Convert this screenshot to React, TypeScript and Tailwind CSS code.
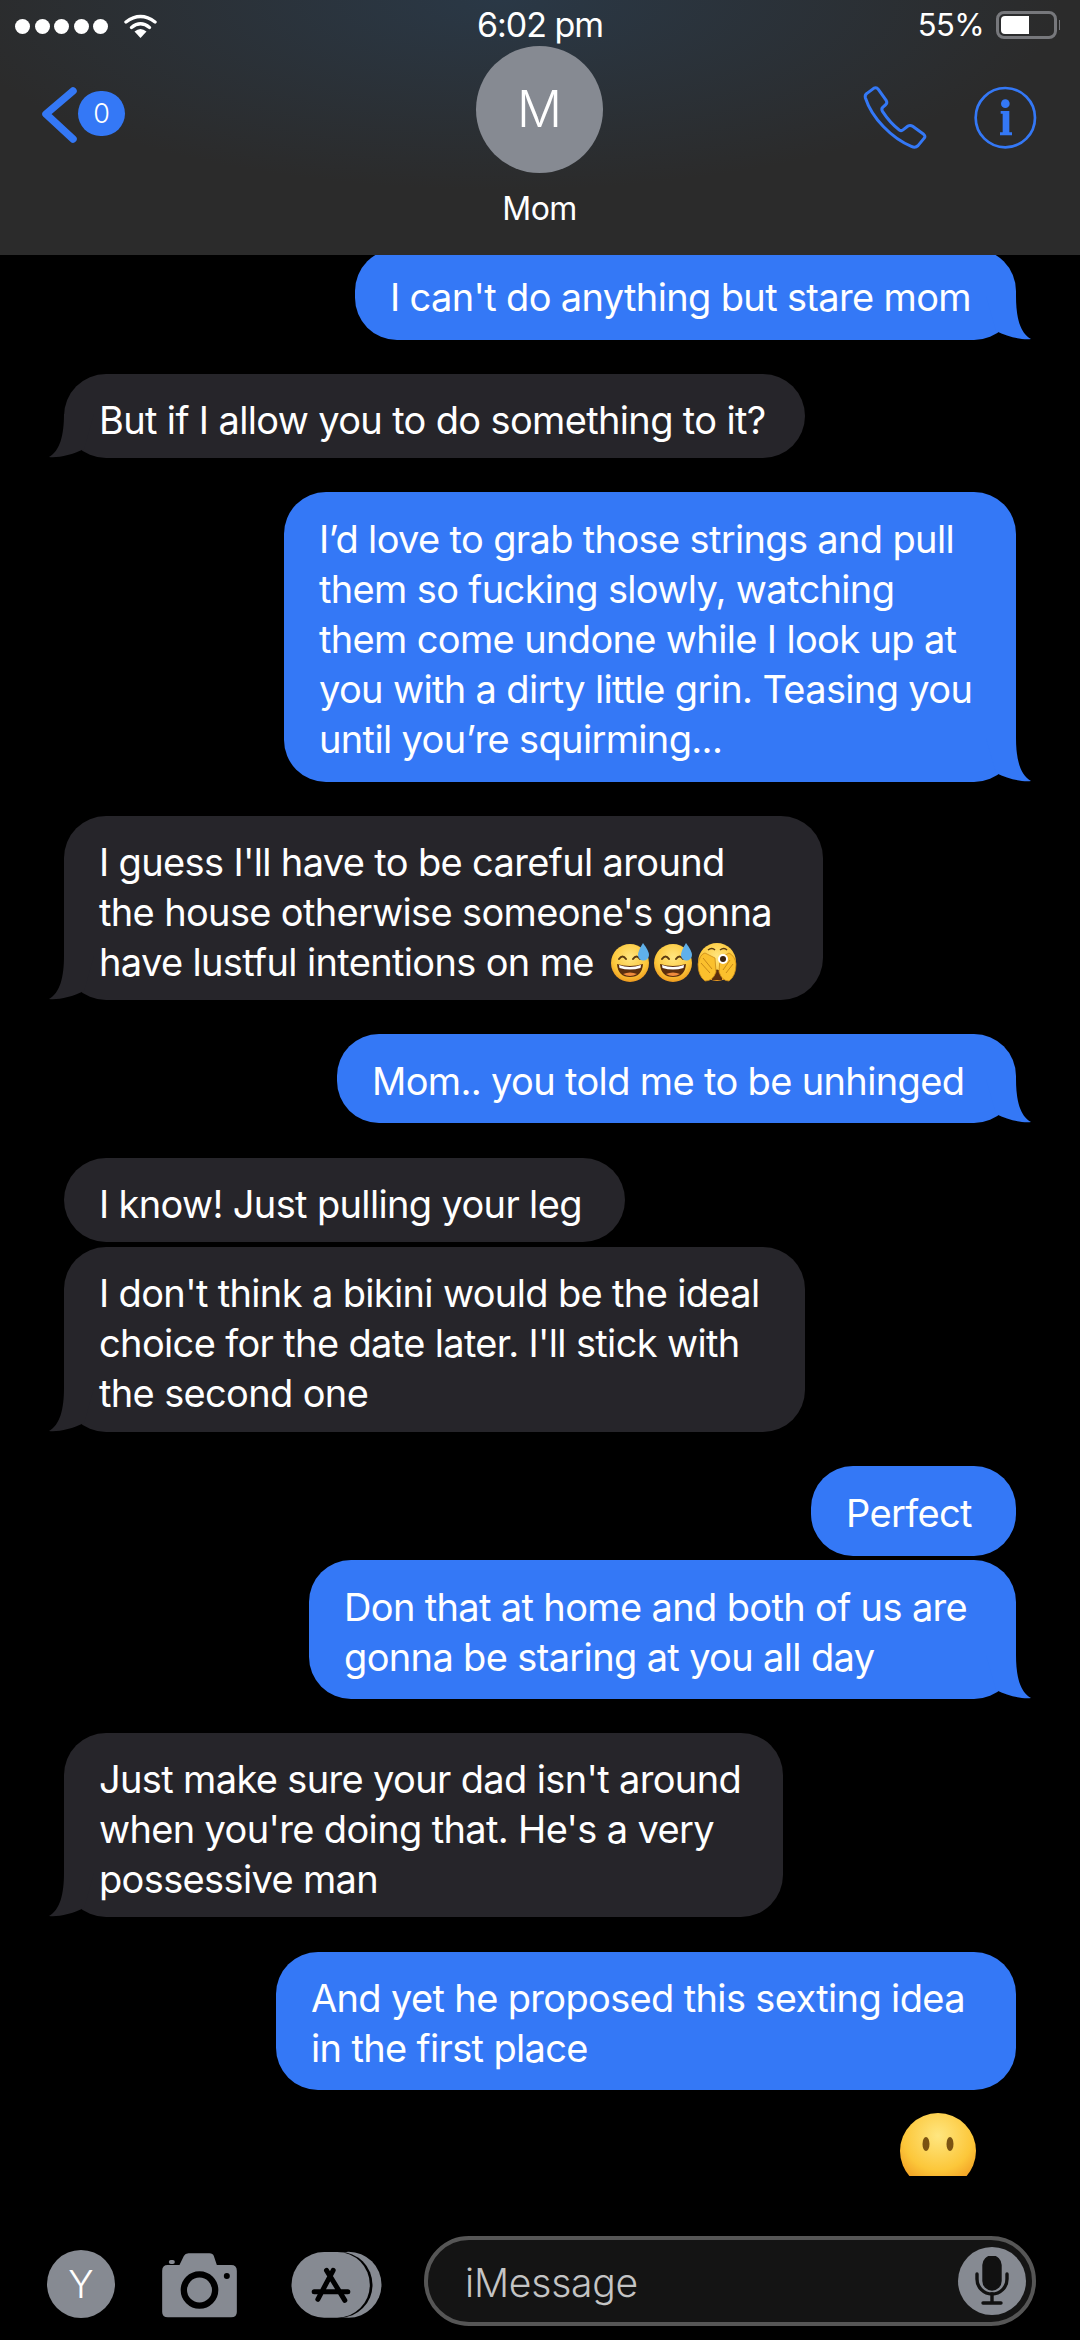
import type { ReactNode } from "react";

function Tail({ side }: { side: "left" | "right" }) {
  return (
    <svg
      className={side === "right" ? "absolute right-[-16px] bottom-0" : "absolute left-[-16px] bottom-0 -scale-x-100"}
      width="60"
      height="44"
      viewBox="-44 -43 60 44"
    >
      <path
        d="M-30 -43 L0 -43 C0 -22 4 -6 15 0 C6 1 -8 -2 -20 -8 Z"
        fill={side === "right" ? "#3478f6" : "#26252a"}
      />
    </svg>
  );
}

function Bubble({
  side,
  tail,
  className,
  children,
}: {
  side: "left" | "right";
  tail?: boolean;
  className: string;
  children: ReactNode;
}) {
  return (
    <div
      className={`relative flex items-center rounded-[42px] px-[35px] ${
        side === "right" ? "self-end mr-[64px] bg-[#3478f6] pt-[4px]" : "self-start ml-[64px] bg-[#26252a] pt-[7px]"
      } ${className}`}
    >
      {tail && <Tail side={side} />}
      <div className="text-[38px] leading-[50px] tracking-[-0.65px] text-white whitespace-nowrap">{children}</div>
    </div>
  );
}

function Line({ children }: { children: ReactNode }) {
  return <div>{children}</div>;
}

function GrinSweat({ className }: { className: string }) {
  return (
    <svg className={`inline-block align-[-6px] ${className}`} width="40" height="40" viewBox="0 0 40 40">
      <defs>
        <radialGradient id="face" cx="50%" cy="35%" r="65%">
          <stop offset="0%" stopColor="#ffe680" />
          <stop offset="70%" stopColor="#fcc73a" />
          <stop offset="100%" stopColor="#ee9a1e" />
        </radialGradient>
      </defs>
      <circle cx="19" cy="21" r="19" fill="url(#face)" />
      <path d="M8 17 Q11.5 12 15 17 M22 17 Q25.5 12 29 17" stroke="#5a3a10" strokeWidth="2" fill="none" strokeLinecap="round" />
      <path d="M6 22 Q19 26 32 22 Q31 35 19 35 Q7 35 6 22 Z" fill="#5b2e0e" />
      <path d="M8 23 Q19 27 30 23 L29.5 26 Q19 29 8.5 26 Z" fill="#fff" />
      <path d="M12 32 Q19 29 26 32 Q19 36 12 32 Z" fill="#f08a3c" />
      <path d="M32 1 Q38 9 38 13 A5.5 5.5 0 0 1 27 13 Q27 9 32 1 Z" fill="#5fb0ea" />
    </svg>
  );
}

function HandsFace() {
  return (
    <svg className="inline-block align-[-6px]" width="40" height="40" viewBox="0 0 40 40">
      <defs>
        <radialGradient id="face2" cx="50%" cy="35%" r="65%">
          <stop offset="0%" stopColor="#ffe680" />
          <stop offset="70%" stopColor="#fcc73a" />
          <stop offset="100%" stopColor="#ee9a1e" />
        </radialGradient>
      </defs>
      <circle cx="20" cy="20" r="19" fill="url(#face2)" />
      <path d="M11 8 Q15 5 18 8 M23 8 Q27 5 30 8" stroke="#5a3a10" strokeWidth="1.5" fill="none" />
      <path d="M15 31 Q20 24 25 31 L25 38 L15 38 Z" fill="#5b2e0e" />
      <path d="M1 22 Q3 12 8 11 L18 16 L19 30 Q16 39 8 39 Q1 34 1 22 Z" fill="#fbc02d" stroke="#c98a18" strokeWidth="0.8" />
      <path d="M39 22 Q38 14 32 11 L23 16 L22 30 Q25 39 32 39 Q39 34 39 22 Z" fill="#fbc02d" stroke="#c98a18" strokeWidth="0.8" />
      <path d="M6 16 L15 27 M4 21 L13 31 M33 18 L26 28 M36 22 L29 31" stroke="#c98a18" strokeWidth="1" />
      <circle cx="26" cy="17" r="5" fill="#fff" />
      <circle cx="26" cy="17" r="3" fill="#3a2410" />
    </svg>
  );
}

function NoMouthFace() {
  return (
    <div className="self-end mr-[104px] mt-[23px] h-[63px] w-[76px] overflow-hidden">
      <svg width="76" height="76" viewBox="0 0 76 76">
        <defs>
          <radialGradient id="blank" cx="50%" cy="30%" r="70%">
            <stop offset="0%" stopColor="#ffe680" />
            <stop offset="65%" stopColor="#fcc73a" />
            <stop offset="100%" stopColor="#f09a20" />
          </radialGradient>
        </defs>
        <circle cx="38" cy="38" r="38" fill="url(#blank)" />
        <ellipse cx="26" cy="31" rx="3.5" ry="7" fill="#7a5212" />
        <ellipse cx="50" cy="31" rx="3.5" ry="7" fill="#7a5212" />
      </svg>
    </div>
  );
}

function Header() {
  return (
    <header className="h-[255px] shrink-0 bg-[radial-gradient(ellipse_560px_190px_at_500px_0px,#2a3846,#2b2b2b)] text-white">
      <div className="grid h-[46px] grid-cols-3 items-center">
        <div className="flex items-center pl-[15px] pt-[6px]">
          <div className="flex gap-[4.5px]">
            <span className="h-[15px] w-[15px] rounded-full bg-white" />
            <span className="h-[15px] w-[15px] rounded-full bg-white" />
            <span className="h-[15px] w-[15px] rounded-full bg-white" />
            <span className="h-[15px] w-[15px] rounded-full bg-white" />
            <span className="h-[15px] w-[15px] rounded-full bg-white" />
          </div>
          <svg className="ml-[16px]" width="33" height="26" viewBox="0 0 33 26" fill="none">
            <path d="M2 9 Q16.5 -2 31 9" stroke="#fff" strokeWidth="3.4" strokeLinecap="round" />
            <path d="M7.5 14.5 Q16.5 7 25.5 14.5" stroke="#fff" strokeWidth="3.4" strokeLinecap="round" />
            <path d="M10.5 18.5 Q16.5 13.5 22.5 18.5 L16.5 25 Z" fill="#fff" />
          </svg>
        </div>
        <div className="pt-[4px] text-center text-[34px] leading-[40px] tracking-[-1px]">6:02 pm</div>
        <div className="flex items-center justify-end pr-[20px] pt-[4px]">
          <span className="mr-[12px] text-[31px] leading-[40px] tracking-[-0.6px]">55%</span>
          <div className="h-[28px] w-[61px] rounded-[8px] border-[3px] border-[#77787c] p-[2px]">
            <div className="h-full w-[28px] rounded-l-[4px] bg-white" />
          </div>
          <div className="ml-[2px] h-[10px] w-[1px] bg-[#77787c]" />
        </div>
      </div>
      <div className="grid grid-cols-[476px_127px_477px]">
        <div className="flex items-start pl-[39px] pt-[39px]">
          <svg width="40" height="60" viewBox="0 0 40 60" fill="none">
            <path d="M34 6 L7 29 L34 54" stroke="#3478f6" strokeWidth="7.5" strokeLinecap="round" strokeLinejoin="round" />
          </svg>
          <div className="ml-[-1px] mt-[6px] flex h-[45px] w-[47px] items-center justify-center rounded-full bg-[#3478f6] text-[27px] font-light leading-none">
            0
          </div>
        </div>
        <div className="flex flex-col items-center">
          <div className="flex h-[127px] w-[127px] items-center justify-center rounded-full bg-[#868a92] text-[50px] font-light">M</div>
          <div className="mt-[14px] text-[32px] leading-[44px] tracking-[-0.6px]">Mom</div>
        </div>
        <div className="flex items-start justify-end pr-[28px] pt-[29px]">
          <svg width="200" height="85" viewBox="0 0 600 255" fill="none" stroke="#3478f6">
            <path
              d="M40 68 Q38 60 45 55 L65 40 Q73 35 79 43 L103 77 Q107 84 100 90 L92 97 Q87 102 92 110 Q115 145 142 165 Q148 169 154 164 L168 153 Q175 149 182 154 L215 178 Q222 184 216 190 L198 212 Q190 220 178 214 C120 190 60 130 40 68 Z"
              strokeWidth="9"
              strokeLinejoin="round"
            />
            <circle cx="460" cy="128" r="89" strokeWidth="8" />
            <circle cx="460" cy="86" r="13" fill="#3478f6" stroke="none" />
            <path d="M446 108 H472 V172 H480 V181 H444 V172 H452 V116 H446 Z" fill="#3478f6" stroke="none" />
          </svg>
        </div>
      </div>
    </header>
  );
}

function Footer() {
  return (
    <footer className="flex h-[164px] shrink-0 items-start pl-[47px] pt-[60px]">
      <div className="mt-[14px] flex h-[68px] w-[68px] items-center justify-center rounded-full bg-[#868a92] text-[38px] font-light leading-none text-white">
        Y
      </div>
      <svg className="ml-[46px] mt-[16px]" width="77" height="66" viewBox="390 36 230 198">
        <path d="M393 92 Q393 75 410 75 H445 L458 48 Q462 40 472 40 H535 Q545 40 548 48 L557 75 H600 Q617 75 617 92 V216 Q617 232 600 232 H410 Q393 232 393 216 Z" fill="#868a92" />
        <rect x="413" y="60" width="18" height="12" rx="6" fill="#868a92" />
        <circle cx="505" cy="150" r="47" fill="#868a92" stroke="#000" strokeWidth="19" />
        <circle cx="587" cy="108" r="9" fill="#000" />
      </svg>
      <svg className="ml-[53px] mt-[15px]" width="92" height="68" viewBox="782 30 275 204">
        <circle cx="954" cy="131" r="99" fill="#868a92" />
        <rect x="783" y="33" width="243" height="197" rx="98" fill="#000" />
        <rect x="783" y="33" width="235" height="197" rx="98" fill="#868a92" />
        <path d="M908 88 L862 175 M888 88 L943 178 M851 152 H952" stroke="#000" strokeWidth="15" strokeLinecap="round" fill="none" />
      </svg>
      <div className="ml-[41px] flex h-[90px] w-[612px] items-center rounded-[45px] border-[4px] border-[#565656] bg-[#141414] pl-[37px] pr-[6px]">
        <span className="flex-1 pt-[5px] text-[39px] font-light tracking-[-0.2px] text-[#c4c4c4]">iMessage</span>
        <div className="flex h-[68px] w-[68px] items-center justify-center rounded-full bg-[#868a92]">
          <svg width="36" height="50" viewBox="0 0 36 50" fill="none" stroke="#111" strokeWidth="3.4" strokeLinecap="round">
            <rect x="10" y="1" width="16" height="32" rx="8" fill="#111" />
            <path d="M3 18 V23 A15 15 0 0 0 33 23 V18" />
            <path d="M18 38 V46 M9 47 H27" />
          </svg>
        </div>
      </div>
    </footer>
  );
}

export default function App() {
  return (
    <div className="flex h-[2340px] w-[1080px] flex-col overflow-hidden bg-black font-[Inter,sans-serif]">
      <Header />
      <main className="flex h-[1921px] shrink-0 flex-col overflow-hidden">
        <Bubble side="right" tail className="mt-[-6px] h-[91px] w-[661px]">
          I can't do anything but stare mom
        </Bubble>
        <Bubble side="left" tail className="mt-[34px] h-[84px] w-[741px]">
          But if I allow you to do something to it?
        </Bubble>
        <Bubble side="right" tail className="mt-[34px] h-[290px] w-[732px]">
          <Line>I’d love to grab those strings and pull</Line>
          <Line>them so fucking slowly, watching</Line>
          <Line>them come undone while I look up at</Line>
          <Line>you with a dirty little grin. Teasing you</Line>
          <Line>until you’re squirming...</Line>
        </Bubble>
        <Bubble side="left" tail className="mt-[34px] h-[184px] w-[759px]">
          <Line>I guess I'll have to be careful around</Line>
          <Line>the house otherwise someone's gonna</Line>
          <Line>
            have lustful intentions on me <GrinSweat className="ml-[7px] mr-[3px]" />
            <GrinSweat className="mr-[3px]" />
            <HandsFace />
          </Line>
        </Bubble>
        <Bubble side="right" tail className="mt-[34px] h-[89px] w-[679px]">
          Mom.. you told me to be unhinged
        </Bubble>
        <Bubble side="left" className="mt-[35px] h-[84px] w-[561px]">
          I know! Just pulling your leg
        </Bubble>
        <Bubble side="left" tail className="mt-[5px] h-[185px] w-[741px]">
          <Line>I don't think a bikini would be the ideal</Line>
          <Line>choice for the date later. I'll stick with</Line>
          <Line>the second one</Line>
        </Bubble>
        <Bubble side="right" className="mt-[34px] h-[90px] w-[205px]">
          Perfect
        </Bubble>
        <Bubble side="right" tail className="mt-[4px] h-[139px] w-[707px]">
          <Line>Don that at home and both of us are</Line>
          <Line>gonna be staring at you all day</Line>
        </Bubble>
        <Bubble side="left" tail className="mt-[34px] h-[184px] w-[719px]">
          <Line>Just make sure your dad isn't around</Line>
          <Line>when you're doing that. He's a very</Line>
          <Line>possessive man</Line>
        </Bubble>
        <Bubble side="right" className="mt-[35px] h-[138px] w-[740px]">
          <Line>And yet he proposed this sexting idea</Line>
          <Line>in the first place</Line>
        </Bubble>
        <NoMouthFace />
      </main>
      <Footer />
    </div>
  );
}
